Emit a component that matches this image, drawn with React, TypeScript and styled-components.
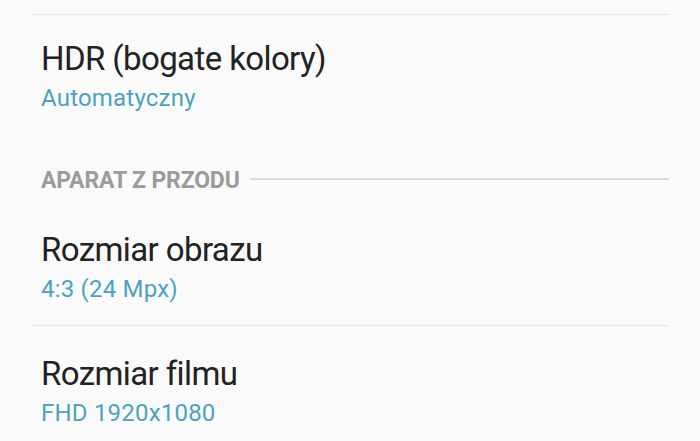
import React from "react";
import styled, { createGlobalStyle } from "styled-components";

const Global = createGlobalStyle`
  html, body { margin: 0; padding: 0; background: #fafafa; }
  body { font-family: Roboto, "Noto Sans", sans-serif; -webkit-font-smoothing: antialiased; }
`;

const Page = styled.div`
  width: 700px;
  height: 441px;
  overflow: hidden;
  background: #fafafa;
  padding: 14px 31px 0 31px;
  box-sizing: border-box;
  display: flex;
  flex-direction: column;
`;

const Divider = styled.div`
  height: 1px;
  background: #e6e6e6;
  flex-shrink: 0;
`;

const Item = styled.div<{ $top: number; $bottom: number }>`
  display: flex;
  flex-direction: column;
  padding: ${(p) => p.$top}px 10px ${(p) => p.$bottom}px 10px;
`;

const Title = styled.div`
  font-size: 33px;
  line-height: 40px;
  letter-spacing: -0.6px;
  color: #222222;
  white-space: nowrap;
`;

const Sub = styled.div`
  font-size: 24px;
  line-height: 30px;
  letter-spacing: 0.2px;
  color: #4aa3c1;
  white-space: nowrap;
  margin-top: 4px;
`;

const Header = styled.div`
  display: flex;
  align-items: center;
  gap: 10px;
  padding: 0 0 0 10px;
  margin-top: 56px;
  margin-bottom: 37px;
`;

const HeaderText = styled.span`
  font-size: 23px;
  line-height: 24px;
  font-weight: 700;
  letter-spacing: -0.15px;
  color: #9b9b9b;
  white-space: nowrap;
`;

const HeaderLine = styled.div`
  flex: 1;
  height: 2px;
  margin-bottom: 4px;
  background: #dadada;
`;

export default function App() {
  return (
    <>
      <Global />
      <Page>
        <Divider />
        <Item $top={24} $bottom={0}>
          <Title>HDR (bogate kolory)</Title>
          <Sub>Automatyczny</Sub>
        </Item>
        <Header>
          <HeaderText>APARAT Z PRZODU</HeaderText>
          <HeaderLine />
        </Header>
        <Item $top={0} $bottom={21}>
          <Title>Rozmiar obrazu</Title>
          <Sub>4:3 (24 Mpx)</Sub>
        </Item>
        <Divider />
        <Item $top={28} $bottom={0}>
          <Title>Rozmiar filmu</Title>
          <Sub>FHD 1920x1080</Sub>
        </Item>
      </Page>
    </>
  );
}
